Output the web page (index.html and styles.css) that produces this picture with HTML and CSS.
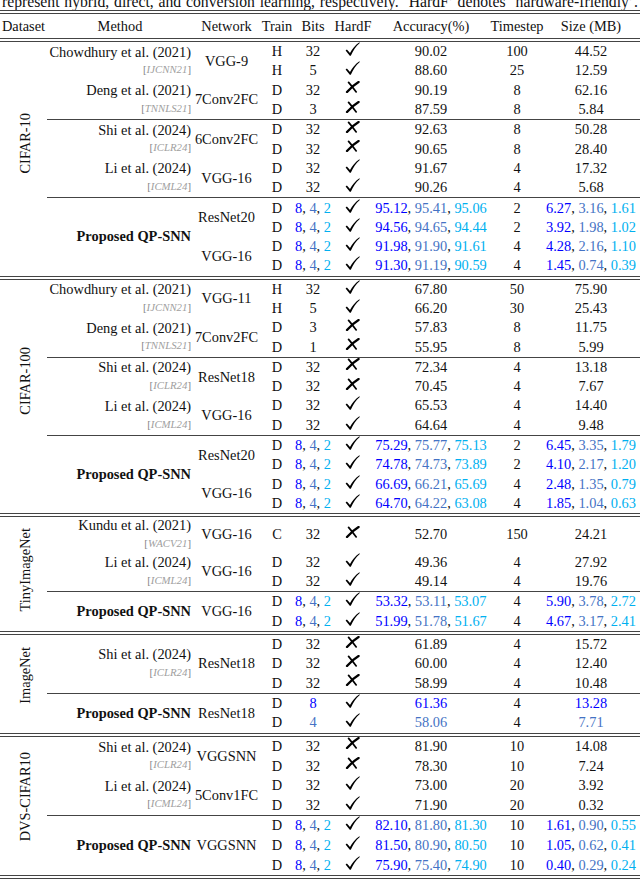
FILE: index.html
```html
<!DOCTYPE html>
<html lang="en">
<head>
<meta charset="utf-8">
<title>QP-SNN comparison table</title>
<link rel="stylesheet" href="styles.css">
</head>
<body>
<svg class="defs" width="0" height="0" aria-hidden="true">
  <symbol id="ck" viewBox="0 0 15 14">
    <path d="M0.6 8.6 L1.9 7.5 L5.0 11.1 C7.2 6.9 10.2 3.1 14.4 0.3 L14.8 0.9 C11.0 4.0 8.2 8.4 5.8 13.7 L4.8 13.7 Z" fill="#000"/>
  </symbol>
  <symbol id="xm" viewBox="0 0 15 12">
    <path d="M3.6 1.4 Q7.2 5.6 11.2 10.9" stroke="#000" stroke-width="1.7" fill="none" stroke-linecap="round"/>
    <path d="M13.6 1.0 Q7.6 4.6 2.0 11.0" stroke="#000" stroke-width="2.3" fill="none" stroke-linecap="round"/>
  </symbol>
</svg>
<div class="page">
  <p class="caption">represent hybrid, direct, and conversion learning, respectively. ‘HardF’ denotes ‘hardware-friendly’.</p>
  <div class="dbl"></div>
  <div class="grid head">
    <div class="c">Dataset</div><div class="c">Method</div><div class="c">Network</div><div class="c">Train</div><div class="c">Bits</div><div class="c">HardF</div><div class="c">Accuracy(%)</div><div class="c">Timestep</div><div class="c sz">Size (MB)</div>
  </div>
  <div class="dbl"></div>

  <!-- CIFAR-10 -->
  <div class="grid sec sec-12">
    <div class="ds ds-c10"><span class="vt">CIFAR-10</span></div>
    <div class="m s2"><span>Chowdhury et al. (2021)</span><span class="vn">[<i>IJCNN21</i>]</span></div>
    <div class="c s2">VGG-9</div>
    <div class="c">H</div><div class="c">32</div><div class="c hf"><svg class="ck"><use href="#ck"/></svg></div><div class="c">90.02</div><div class="c">100</div><div class="c sz">44.52</div>
    <div class="c">H</div><div class="c">5</div><div class="c hf"><svg class="ck"><use href="#ck"/></svg></div><div class="c">88.60</div><div class="c">25</div><div class="c sz">12.59</div>
    <div class="m s2"><span>Deng et al. (2021)</span><span class="vn">[<i>TNNLS21</i>]</span></div>
    <div class="c s2">7Conv2FC</div>
    <div class="c">D</div><div class="c">32</div><div class="c hf x"><svg class="xm"><use href="#xm"/></svg></div><div class="c">90.19</div><div class="c">8</div><div class="c sz">62.16</div>
    <div class="c">D</div><div class="c">3</div><div class="c hf x"><svg class="xm"><use href="#xm"/></svg></div><div class="c">87.59</div><div class="c">8</div><div class="c sz">5.84</div>
    <div class="rule"></div>
    <div class="m s2"><span>Shi et al. (2024)</span><span class="vn">[<i>ICLR24</i>]</span></div>
    <div class="c s2">6Conv2FC</div>
    <div class="c">D</div><div class="c">32</div><div class="c hf x"><svg class="xm"><use href="#xm"/></svg></div><div class="c">92.63</div><div class="c">8</div><div class="c sz">50.28</div>
    <div class="c">D</div><div class="c">32</div><div class="c hf x"><svg class="xm"><use href="#xm"/></svg></div><div class="c">90.65</div><div class="c">8</div><div class="c sz">28.40</div>
    <div class="m s2"><span>Li et al. (2024)</span><span class="vn">[<i>ICML24</i>]</span></div>
    <div class="c s2">VGG-16</div>
    <div class="c">D</div><div class="c">32</div><div class="c hf"><svg class="ck"><use href="#ck"/></svg></div><div class="c">91.67</div><div class="c">4</div><div class="c sz">17.32</div>
    <div class="c">D</div><div class="c">32</div><div class="c hf"><svg class="ck"><use href="#ck"/></svg></div><div class="c">90.26</div><div class="c">4</div><div class="c sz">5.68</div>
    <div class="rule"></div>
    <div class="m s4 ours">Proposed QP-SNN</div>
    <div class="c s2">ResNet20</div>
    <div class="c">D</div><div class="c"><span class="b1">8</span>,&nbsp;<span class="b2">4</span>,&nbsp;<span class="b3">2</span></div><div class="c hf"><svg class="ck"><use href="#ck"/></svg></div><div class="c"><span class="b1">95.12</span>,&nbsp;<span class="b2">95.41</span>,&nbsp;<span class="b3">95.06</span></div><div class="c">2</div><div class="c sz"><span class="b1">6.27</span>,&nbsp;<span class="b2">3.16</span>,&nbsp;<span class="b3">1.61</span></div>
    <div class="c">D</div><div class="c"><span class="b1">8</span>,&nbsp;<span class="b2">4</span>,&nbsp;<span class="b3">2</span></div><div class="c hf"><svg class="ck"><use href="#ck"/></svg></div><div class="c"><span class="b1">94.56</span>,&nbsp;<span class="b2">94.65</span>,&nbsp;<span class="b3">94.44</span></div><div class="c">2</div><div class="c sz"><span class="b1">3.92</span>,&nbsp;<span class="b2">1.98</span>,&nbsp;<span class="b3">1.02</span></div>
    <div class="c s2">VGG-16</div>
    <div class="c">D</div><div class="c"><span class="b1">8</span>,&nbsp;<span class="b2">4</span>,&nbsp;<span class="b3">2</span></div><div class="c hf"><svg class="ck"><use href="#ck"/></svg></div><div class="c"><span class="b1">91.98</span>,&nbsp;<span class="b2">91.90</span>,&nbsp;<span class="b3">91.61</span></div><div class="c">4</div><div class="c sz"><span class="b1">4.28</span>,&nbsp;<span class="b2">2.16</span>,&nbsp;<span class="b3">1.10</span></div>
    <div class="c">D</div><div class="c"><span class="b1">8</span>,&nbsp;<span class="b2">4</span>,&nbsp;<span class="b3">2</span></div><div class="c hf"><svg class="ck"><use href="#ck"/></svg></div><div class="c"><span class="b1">91.30</span>,&nbsp;<span class="b2">91.19</span>,&nbsp;<span class="b3">90.59</span></div><div class="c">4</div><div class="c sz"><span class="b1">1.45</span>,&nbsp;<span class="b2">0.74</span>,&nbsp;<span class="b3">0.39</span></div>
  </div>
  <div class="dbl"></div>

  <!-- CIFAR-100 -->
  <div class="grid sec sec-12">
    <div class="ds ds-c100"><span class="vt">CIFAR-100</span></div>
    <div class="m s2"><span>Chowdhury et al. (2021)</span><span class="vn">[<i>IJCNN21</i>]</span></div>
    <div class="c s2">VGG-11</div>
    <div class="c">H</div><div class="c">32</div><div class="c hf"><svg class="ck"><use href="#ck"/></svg></div><div class="c">67.80</div><div class="c">50</div><div class="c sz">75.90</div>
    <div class="c">H</div><div class="c">5</div><div class="c hf"><svg class="ck"><use href="#ck"/></svg></div><div class="c">66.20</div><div class="c">30</div><div class="c sz">25.43</div>
    <div class="m s2"><span>Deng et al. (2021)</span><span class="vn">[<i>TNNLS21</i>]</span></div>
    <div class="c s2">7Conv2FC</div>
    <div class="c">D</div><div class="c">3</div><div class="c hf x"><svg class="xm"><use href="#xm"/></svg></div><div class="c">57.83</div><div class="c">8</div><div class="c sz">11.75</div>
    <div class="c">D</div><div class="c">1</div><div class="c hf x"><svg class="xm"><use href="#xm"/></svg></div><div class="c">55.95</div><div class="c">8</div><div class="c sz">5.99</div>
    <div class="rule"></div>
    <div class="m s2"><span>Shi et al. (2024)</span><span class="vn">[<i>ICLR24</i>]</span></div>
    <div class="c s2">ResNet18</div>
    <div class="c">D</div><div class="c">32</div><div class="c hf x"><svg class="xm"><use href="#xm"/></svg></div><div class="c">72.34</div><div class="c">4</div><div class="c sz">13.18</div>
    <div class="c">D</div><div class="c">32</div><div class="c hf x"><svg class="xm"><use href="#xm"/></svg></div><div class="c">70.45</div><div class="c">4</div><div class="c sz">7.67</div>
    <div class="m s2"><span>Li et al. (2024)</span><span class="vn">[<i>ICML24</i>]</span></div>
    <div class="c s2">VGG-16</div>
    <div class="c">D</div><div class="c">32</div><div class="c hf"><svg class="ck"><use href="#ck"/></svg></div><div class="c">65.53</div><div class="c">4</div><div class="c sz">14.40</div>
    <div class="c">D</div><div class="c">32</div><div class="c hf"><svg class="ck"><use href="#ck"/></svg></div><div class="c">64.64</div><div class="c">4</div><div class="c sz">9.48</div>
    <div class="rule"></div>
    <div class="m s4 ours">Proposed QP-SNN</div>
    <div class="c s2">ResNet20</div>
    <div class="c">D</div><div class="c"><span class="b1">8</span>,&nbsp;<span class="b2">4</span>,&nbsp;<span class="b3">2</span></div><div class="c hf"><svg class="ck"><use href="#ck"/></svg></div><div class="c"><span class="b1">75.29</span>,&nbsp;<span class="b2">75.77</span>,&nbsp;<span class="b3">75.13</span></div><div class="c">2</div><div class="c sz"><span class="b1">6.45</span>,&nbsp;<span class="b2">3.35</span>,&nbsp;<span class="b3">1.79</span></div>
    <div class="c">D</div><div class="c"><span class="b1">8</span>,&nbsp;<span class="b2">4</span>,&nbsp;<span class="b3">2</span></div><div class="c hf"><svg class="ck"><use href="#ck"/></svg></div><div class="c"><span class="b1">74.78</span>,&nbsp;<span class="b2">74.73</span>,&nbsp;<span class="b3">73.89</span></div><div class="c">2</div><div class="c sz"><span class="b1">4.10</span>,&nbsp;<span class="b2">2.17</span>,&nbsp;<span class="b3">1.20</span></div>
    <div class="c s2">VGG-16</div>
    <div class="c">D</div><div class="c"><span class="b1">8</span>,&nbsp;<span class="b2">4</span>,&nbsp;<span class="b3">2</span></div><div class="c hf"><svg class="ck"><use href="#ck"/></svg></div><div class="c"><span class="b1">66.69</span>,&nbsp;<span class="b2">66.21</span>,&nbsp;<span class="b3">65.69</span></div><div class="c">4</div><div class="c sz"><span class="b1">2.48</span>,&nbsp;<span class="b2">1.35</span>,&nbsp;<span class="b3">0.79</span></div>
    <div class="c">D</div><div class="c"><span class="b1">8</span>,&nbsp;<span class="b2">4</span>,&nbsp;<span class="b3">2</span></div><div class="c hf"><svg class="ck"><use href="#ck"/></svg></div><div class="c"><span class="b1">64.70</span>,&nbsp;<span class="b2">64.22</span>,&nbsp;<span class="b3">63.08</span></div><div class="c">4</div><div class="c sz"><span class="b1">1.85</span>,&nbsp;<span class="b2">1.04</span>,&nbsp;<span class="b3">0.63</span></div>
  </div>
  <div class="dbl"></div>

  <!-- TinyImageNet -->
  <div class="grid sec sec-tiny">
    <div class="ds ds-tiny"><span class="vt">TinyImageNet</span></div>
    <div class="m"><span>Kundu et al. (2021)</span><span class="vn">[<i>WACV21</i>]</span></div>
    <div class="c">VGG-16</div>
    <div class="c">C</div><div class="c">32</div><div class="c hf x"><svg class="xm"><use href="#xm"/></svg></div><div class="c">52.70</div><div class="c">150</div><div class="c sz">24.21</div>
    <div class="m s2"><span>Li et al. (2024)</span><span class="vn">[<i>ICML24</i>]</span></div>
    <div class="c s2">VGG-16</div>
    <div class="c">D</div><div class="c">32</div><div class="c hf"><svg class="ck"><use href="#ck"/></svg></div><div class="c">49.36</div><div class="c">4</div><div class="c sz">27.92</div>
    <div class="c">D</div><div class="c">32</div><div class="c hf"><svg class="ck"><use href="#ck"/></svg></div><div class="c">49.14</div><div class="c">4</div><div class="c sz">19.76</div>
    <div class="rule"></div>
    <div class="m s2 ours">Proposed QP-SNN</div>
    <div class="c s2">VGG-16</div>
    <div class="c">D</div><div class="c"><span class="b1">8</span>,&nbsp;<span class="b2">4</span>,&nbsp;<span class="b3">2</span></div><div class="c hf"><svg class="ck"><use href="#ck"/></svg></div><div class="c"><span class="b1">53.32</span>,&nbsp;<span class="b2">53.11</span>,&nbsp;<span class="b3">53.07</span></div><div class="c">4</div><div class="c sz"><span class="b1">5.90</span>,&nbsp;<span class="b2">3.78</span>,&nbsp;<span class="b3">2.72</span></div>
    <div class="c">D</div><div class="c"><span class="b1">8</span>,&nbsp;<span class="b2">4</span>,&nbsp;<span class="b3">2</span></div><div class="c hf"><svg class="ck"><use href="#ck"/></svg></div><div class="c"><span class="b1">51.99</span>,&nbsp;<span class="b2">51.78</span>,&nbsp;<span class="b3">51.67</span></div><div class="c">4</div><div class="c sz"><span class="b1">4.67</span>,&nbsp;<span class="b2">3.17</span>,&nbsp;<span class="b3">2.41</span></div>
  </div>
  <div class="dbl"></div>

  <!-- ImageNet -->
  <div class="grid sec sec-imnet">
    <div class="ds ds-imnet"><span class="vt">ImageNet</span></div>
    <div class="m s3"><span>Shi et al. (2024)</span><span class="vn">[<i>ICLR24</i>]</span></div>
    <div class="c s3">ResNet18</div>
    <div class="c">D</div><div class="c">32</div><div class="c hf x"><svg class="xm"><use href="#xm"/></svg></div><div class="c">61.89</div><div class="c">4</div><div class="c sz">15.72</div>
    <div class="c">D</div><div class="c">32</div><div class="c hf x"><svg class="xm"><use href="#xm"/></svg></div><div class="c">60.00</div><div class="c">4</div><div class="c sz">12.40</div>
    <div class="c">D</div><div class="c">32</div><div class="c hf x"><svg class="xm"><use href="#xm"/></svg></div><div class="c">58.99</div><div class="c">4</div><div class="c sz">10.48</div>
    <div class="rule"></div>
    <div class="m s2 ours">Proposed QP-SNN</div>
    <div class="c s2">ResNet18</div>
    <div class="c">D</div><div class="c"><span class="b1">8</span></div><div class="c hf"><svg class="ck"><use href="#ck"/></svg></div><div class="c"><span class="b1">61.36</span></div><div class="c">4</div><div class="c sz"><span class="b1">13.28</span></div>
    <div class="c">D</div><div class="c"><span class="b2">4</span></div><div class="c hf"><svg class="ck"><use href="#ck"/></svg></div><div class="c"><span class="b2">58.06</span></div><div class="c">4</div><div class="c sz"><span class="b2">7.71</span></div>
  </div>
  <div class="dbl"></div>

  <!-- DVS-CIFAR10 -->
  <div class="grid sec sec-dvs">
    <div class="ds ds-dvs"><span class="vt">DVS-CIFAR10</span></div>
    <div class="m s2"><span>Shi et al. (2024)</span><span class="vn">[<i>ICLR24</i>]</span></div>
    <div class="c s2">VGGSNN</div>
    <div class="c">D</div><div class="c">32</div><div class="c hf x"><svg class="xm"><use href="#xm"/></svg></div><div class="c">81.90</div><div class="c">10</div><div class="c sz">14.08</div>
    <div class="c">D</div><div class="c">32</div><div class="c hf x"><svg class="xm"><use href="#xm"/></svg></div><div class="c">78.30</div><div class="c">10</div><div class="c sz">7.24</div>
    <div class="m s2"><span>Li et al. (2024)</span><span class="vn">[<i>ICML24</i>]</span></div>
    <div class="c s2">5Conv1FC</div>
    <div class="c">D</div><div class="c">32</div><div class="c hf"><svg class="ck"><use href="#ck"/></svg></div><div class="c">73.00</div><div class="c">20</div><div class="c sz">3.92</div>
    <div class="c">D</div><div class="c">32</div><div class="c hf"><svg class="ck"><use href="#ck"/></svg></div><div class="c">71.90</div><div class="c">20</div><div class="c sz">0.32</div>
    <div class="rule"></div>
    <div class="m s3 ours">Proposed QP-SNN</div>
    <div class="c s3">VGGSNN</div>
    <div class="c">D</div><div class="c"><span class="b1">8</span>,&nbsp;<span class="b2">4</span>,&nbsp;<span class="b3">2</span></div><div class="c hf"><svg class="ck"><use href="#ck"/></svg></div><div class="c"><span class="b1">82.10</span>,&nbsp;<span class="b2">81.80</span>,&nbsp;<span class="b3">81.30</span></div><div class="c">10</div><div class="c sz"><span class="b1">1.61</span>,&nbsp;<span class="b2">0.90</span>,&nbsp;<span class="b3">0.55</span></div>
    <div class="c">D</div><div class="c"><span class="b1">8</span>,&nbsp;<span class="b2">4</span>,&nbsp;<span class="b3">2</span></div><div class="c hf"><svg class="ck"><use href="#ck"/></svg></div><div class="c"><span class="b1">81.50</span>,&nbsp;<span class="b2">80.90</span>,&nbsp;<span class="b3">80.50</span></div><div class="c">10</div><div class="c sz"><span class="b1">1.05</span>,&nbsp;<span class="b2">0.62</span>,&nbsp;<span class="b3">0.41</span></div>
    <div class="c">D</div><div class="c"><span class="b1">8</span>,&nbsp;<span class="b2">4</span>,&nbsp;<span class="b3">2</span></div><div class="c hf"><svg class="ck"><use href="#ck"/></svg></div><div class="c"><span class="b1">75.90</span>,&nbsp;<span class="b2">75.40</span>,&nbsp;<span class="b3">74.90</span></div><div class="c">10</div><div class="c sz"><span class="b1">0.40</span>,&nbsp;<span class="b2">0.29</span>,&nbsp;<span class="b3">0.24</span></div>
  </div>
  <div class="dbl"></div>
</div>
</body>
</html>
```
FILE: styles.css
```css
html, body {
  margin: 0;
  padding: 0;
  background: #ffffff;
}

.defs {
  display: block;
  width: 0;
  height: 0;
  overflow: hidden;
}

.page {
  width: 640px;
  height: 879px;
  overflow: hidden;
  font-family: "Liberation Serif", "Times New Roman", serif;
  font-size: 14.4px;
  color: #111111;
}

.caption {
  margin: -6px 0 0 0;
  padding: 0 2px;
  height: 16px;
  overflow: hidden;
  font-size: 15.7px;
  line-height: 16px;
  text-align: justify;
  text-align-last: justify;
}

.dbl {
  height: 4px;
  box-sizing: border-box;
  border-top: 1px solid #444444;
  border-bottom: 1px solid #444444;
}

.grid {
  display: grid;
  grid-template-columns: 47px 146px 67px 34px 38px 42px 114px 58px 94px;
}

.head {
  height: 24px;
}

.sec-12 {
  --r: 19.3px;
  grid-template-rows: repeat(4, var(--r)) 1px repeat(4, var(--r)) 1px repeat(4, var(--r));
}

.sec-tiny {
  --r: 19.35px;
  grid-template-rows: 35.5px var(--r) var(--r) 1px var(--r) var(--r);
}

.sec-imnet {
  --r: 19.34px;
  grid-template-rows: repeat(3, var(--r)) 1px repeat(2, var(--r));
}

.sec-dvs {
  --r: 19.6px;
  grid-template-rows: repeat(4, var(--r)) 1px repeat(3, var(--r));
}

.c {
  display: flex;
  align-items: center;
  justify-content: center;
  white-space: nowrap;
}

.sz {
  padding-right: 4px;
}

.m {
  display: flex;
  flex-direction: column;
  align-items: flex-end;
  justify-content: center;
  padding-right: 2px;
  white-space: nowrap;
  line-height: 17.6px;
}

.ours {
  font-weight: bold;
}

.vn {
  font-size: 10.8px;
  color: #858585;
}

.vn i {
  color: #a0a0a0;
}

.s2 { grid-row: span 2; }
.s3 { grid-row: span 3; }
.s4 { grid-row: span 4; }

.rule {
  grid-column: 2 / -1;
  background: #444444;
}

.ds {
  grid-column: 1;
  grid-row: 1 / -1;
  display: flex;
  align-items: center;
  justify-content: center;
  padding-left: 4px;
}

.vt {
  writing-mode: vertical-rl;
  transform: rotate(180deg);
  line-height: 1;
  white-space: nowrap;
}

.ds-c10 { padding-bottom: 32px; }
.ds-c100 { padding-bottom: 30px; }
.ds-tiny { padding-bottom: 9px; }
.ds-imnet { padding-bottom: 16px; }
.ds-dvs { padding-bottom: 18px; }

.hf {
  padding-bottom: 5px;
  padding-right: 2px;
}

.hf.x {
  padding-bottom: 6px;
}

.ck {
  display: block;
  width: 15px;
  height: 14px;
}

.xm {
  display: block;
  width: 15px;
  height: 12px;
}

.b1 { color: #0000ff; }
.b2 { color: #4472c4; }
.b3 { color: #00b0f0; }
```
